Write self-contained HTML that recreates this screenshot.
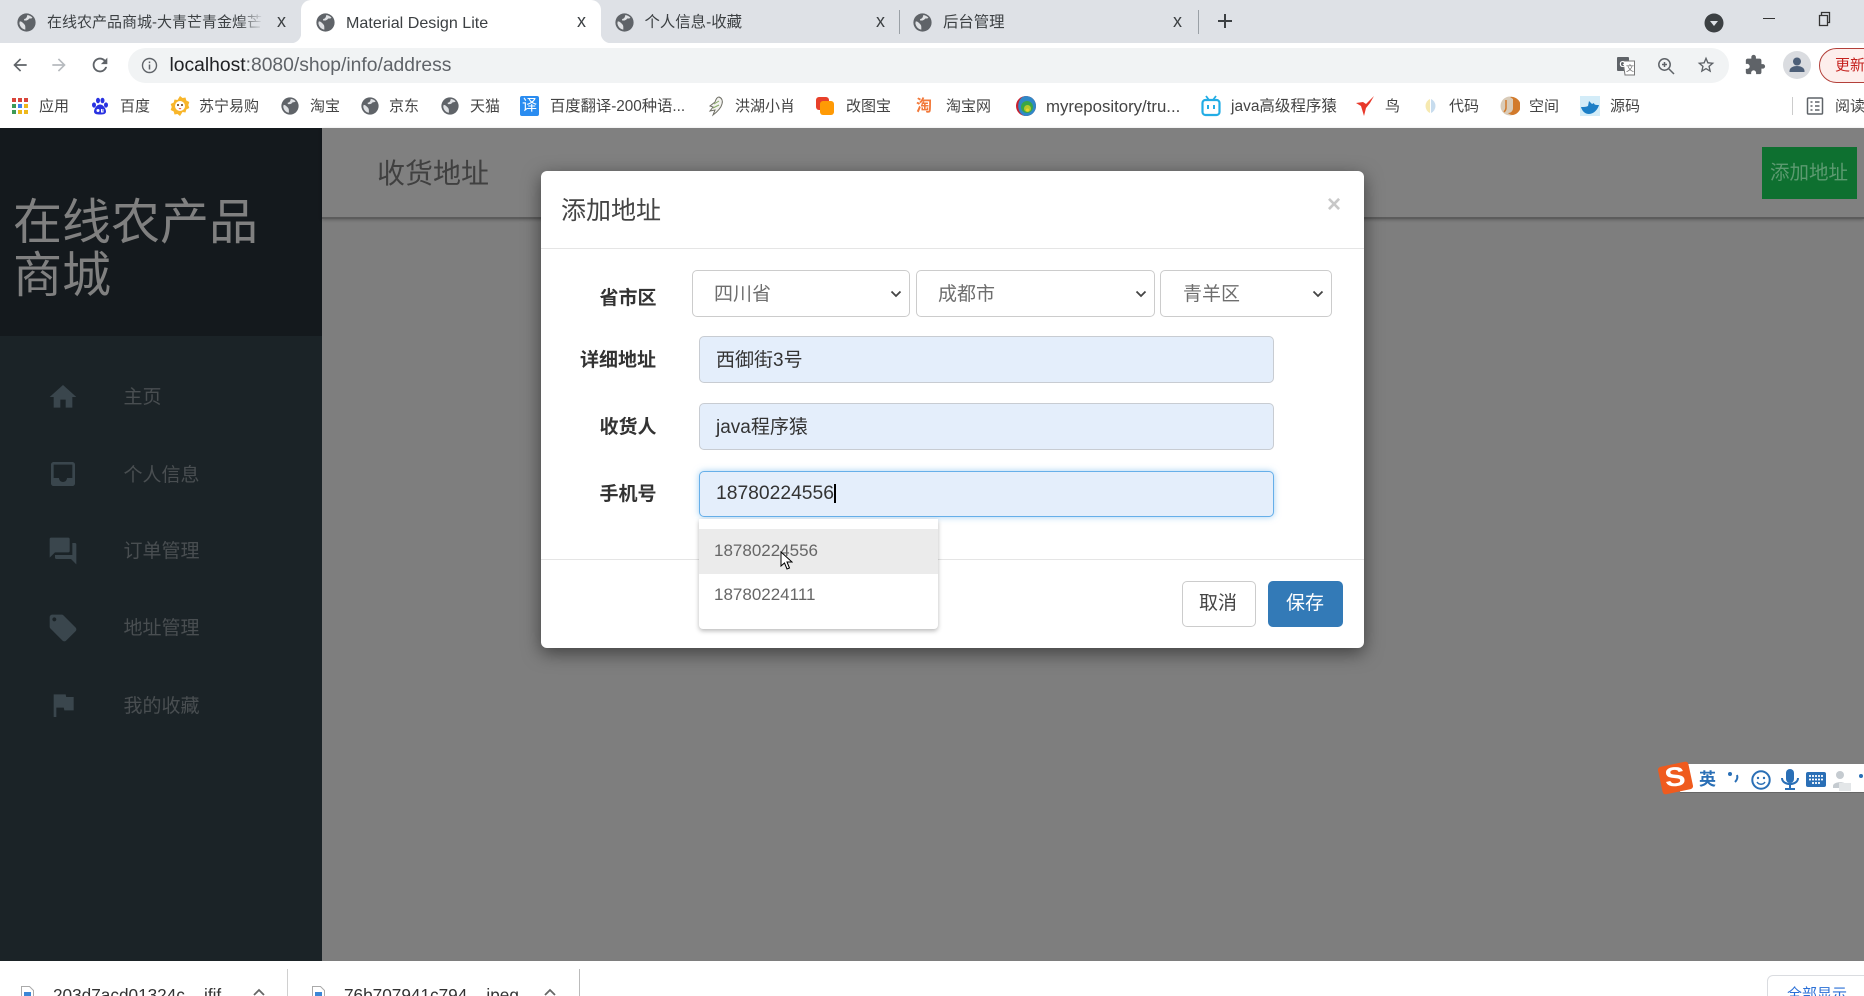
<!DOCTYPE html>
<html lang="zh-CN">
<head>
<meta charset="utf-8">
<title>Material Design Lite</title>
<style>
html,body{margin:0;padding:0;width:1864px;height:996px;overflow:hidden;background:#fff}
body{position:relative;font-family:"Liberation Sans","Noto Sans CJK SC",sans-serif;color:#333}
div,span,svg{position:absolute;box-sizing:border-box}
.t{white-space:nowrap}
.tab{font-size:15px;line-height:20px;top:13px;color:#3c4043}
.x{font-size:18px;line-height:20px;top:11px;color:#3c4043;font-weight:normal}
.bk{font-size:15px;line-height:20px;top:97px;color:#444}
.lbl{font-size:19px;font-weight:bold;line-height:26px;color:#333}
.nav{font-size:19px;line-height:26px;left:123.500px;color:#494e51}
.ni{left:47px;width:32px;height:32px;fill:#3a464d}
.sel{top:270px;height:47px;background:#fff;border:1px solid #ccc;border-radius:5px}
.st{top:284px;font-size:19px;line-height:22px;color:#6e6e6e}
.inp{left:699px;width:575px;height:47px;background:#e4eefb;border:1px solid #c8ccd2;border-radius:5px}
.it{left:716px;font-size:19px;line-height:26px;color:#333}
.g{width:19px;height:19px}
</style>
</head>
<body>
<svg width="0" height="0" style="left:0;top:0">
<defs>
<symbol id="globe" viewBox="0 0 24 24">
<circle cx="12" cy="12" r="11.500" fill="#5f6368"/>
<path d="M3.500 10.500c2 0 3 1 4.500 2.500s2.500 2.500 2.500 4.500v3.500c-4-.5-7-4-7.500-8zM13 2.500c3 .5 5 1.500 6.500 3.500-1 1-2.500 1-4 1-1 1.500-2 2-3.500 2.500H9V7.500c2 0 3.500-1.500 4-5z" fill="#dfe1e4"/>
</symbol>
</defs>
</svg>

<!-- tab strip -->
<div style="left:0;top:0;width:1864px;height:43px;background:#dee1e6"></div>
<div style="left:301px;top:0;width:300px;height:43px;background:#fff;border-radius:10px 10px 0 0"></div>
<div style="left:291px;top:33px;width:10px;height:10px;background:radial-gradient(circle at 0 0,#dee1e6 10px,#fff 10.500px)"></div>
<div style="left:601px;top:33px;width:10px;height:10px;background:radial-gradient(circle at 100% 0,#dee1e6 10px,#fff 10.500px)"></div>

<svg class="g" style="left:17px;top:13px"><use href="#globe"/></svg>
<div class="t tab" style="left:47px;width:216px;overflow:hidden">在线农产品商城-大青芒青金煌芒</div>
<div style="left:238px;top:8px;width:26px;height:28px;background:linear-gradient(90deg,rgba(222,225,230,0),#dee1e6)"></div>
<div class="t x" style="left:277px">x</div>

<svg class="g" style="left:316px;top:13px"><use href="#globe"/></svg>
<div class="t tab" style="left:346px;font-size:16.100px">Material Design Lite</div>
<div class="t x" style="left:577px">x</div>

<svg class="g" style="left:615px;top:13px"><use href="#globe"/></svg>
<div class="t tab" style="left:644.500px;font-size:15.400px">个人信息-收藏</div>
<div class="t x" style="left:876px">x</div>
<div style="left:899px;top:10px;width:1px;height:24px;background:#9aa0a6"></div>

<svg class="g" style="left:913px;top:13px"><use href="#globe"/></svg>
<div class="t tab" style="left:943px;font-size:15.400px">后台管理</div>
<div class="t x" style="left:1173px">x</div>
<div style="left:1198px;top:10px;width:1px;height:24px;background:#9aa0a6"></div>
<svg style="left:1216px;top:12px" width="18" height="18" viewBox="0 0 18 18"><path d="M9 2v14M2 9h14" stroke="#3c4043" stroke-width="2" fill="none"/></svg>

<svg style="left:1704px;top:13px" width="20" height="20" viewBox="0 0 20 20"><circle cx="10" cy="10" r="9.500" fill="#3c4043"/><path d="M6 8h8l-4 5z" fill="#dee1e6"/></svg>
<div style="left:1763px;top:18px;width:12px;height:1px;background:#333"></div>
<svg style="left:1818px;top:11px" width="14" height="16" viewBox="0 0 14 16"><path d="M3.500 4.500V1.500h8v10h-2.500M1.500 4.500h8v10h-8z" stroke="#333" stroke-width="1.300" fill="none"/></svg>

<!-- toolbar -->
<div style="left:0;top:43px;width:1864px;height:85px;background:#fff"></div>
<div style="left:128px;top:48px;width:1601px;height:35px;background:#f1f3f4;border-radius:18px"></div>
<svg style="left:10px;top:55px" width="20" height="20" viewBox="0 0 24 24"><path d="M20 11H7.800l5.600-5.600L12 4l-8 8 8 8 1.400-1.400L7.800 13H20z" fill="#5f6368"/></svg>
<svg style="left:49px;top:55px" width="20" height="20" viewBox="0 0 24 24"><path d="M12 4l-1.400 1.400 5.600 5.600H4v2h12.200l-5.600 5.600L12 20l8-8z" fill="#b6babe"/></svg>
<svg style="left:89px;top:54px" width="22" height="22" viewBox="0 0 24 24"><path d="M17.650 6.350C16.200 4.900 14.210 4 12 4c-4.420 0-7.990 3.580-7.990 8s3.570 8 7.990 8c3.730 0 6.840-2.550 7.730-6h-2.080c-.82 2.330-3.040 4-5.650 4-3.310 0-6-2.690-6-6s2.690-6 6-6c1.660 0 3.140.69 4.220 1.780L13 11h7V4l-2.350 2.350z" fill="#5f6368"/></svg>
<svg style="left:141px;top:57px" width="17" height="17" viewBox="0 0 17 17"><circle cx="8.500" cy="8.500" r="7" fill="none" stroke="#5f6368" stroke-width="1.400"/><path d="M8.500 7.500v5M8.500 4.500v1.600" stroke="#5f6368" stroke-width="1.500"/></svg>
<div class="t" style="left:169.500px;top:55px;font-size:19.300px;line-height:21px;color:#202124">localhost<span style="position:static;color:#5f6368">:8080/shop/info/address</span></div>

<svg style="left:1616px;top:56px" width="20" height="20" viewBox="0 0 20 20"><rect x="1" y="1" width="12" height="14" rx="1" fill="#5f6368"/><path d="M7 5h11.500v14H9z" fill="#fff" stroke="#777" stroke-width="1"/><text x="3.500" y="11" font-size="8" fill="#fff" font-family="Liberation Sans" font-weight="bold">G</text><text x="10" y="15" font-size="8" fill="#666" font-family="Noto Sans CJK SC">文</text></svg>
<svg style="left:1657px;top:57px" width="18" height="18" viewBox="0 0 18 18"><circle cx="7.500" cy="7.500" r="5.700" fill="none" stroke="#5f6368" stroke-width="1.500"/><path d="M12 12l5 5M5 7.500h5M7.500 5v5" stroke="#5f6368" stroke-width="1.500"/></svg>
<svg style="left:1696px;top:55px" width="20" height="20" viewBox="0 0 24 24"><path d="M22 9.240l-7.190-.62L12 2 9.190 8.630 2 9.240l5.460 4.730L5.820 21 12 17.270 18.180 21l-1.630-7.030L22 9.240zM12 15.400l-3.760 2.270 1-4.280-3.320-2.880 4.380-.38L12 6.100l1.710 4.040 4.380.38-3.320 2.880 1 4.280L12 15.400z" fill="#5f6368"/></svg>
<svg style="left:1744px;top:54px" width="22" height="22" viewBox="0 0 24 24"><path d="M20.500 11H19V7c0-1.100-.9-2-2-2h-4V3.500C13 2.120 11.880 1 10.500 1S8 2.120 8 3.500V5H4c-1.100 0-1.990.9-1.990 2v3.800H3.500c1.490 0 2.700 1.210 2.700 2.700s-1.210 2.700-2.700 2.700H2V20c0 1.100.9 2 2 2h3.800v-1.500c0-1.490 1.210-2.700 2.700-2.700 1.490 0 2.700 1.210 2.700 2.700V22H17c1.100 0 2-.9 2-2v-4h1.500c1.380 0 2.500-1.120 2.500-2.500S21.880 11 20.500 11z" fill="#5f6368"/></svg>
<svg style="left:1783px;top:51px" width="28" height="28" viewBox="0 0 28 28"><circle cx="14" cy="14" r="14" fill="#dadce0"/><circle cx="14" cy="10.500" r="4" fill="#4d5f78"/><path d="M6.500 20c0-3.500 4-5 7.500-5s7.500 1.500 7.500 5v1h-15z" fill="#4d5f78"/></svg>
<div style="left:1819px;top:48px;width:70px;height:35px;background:#fdeeec;border:1px solid #b3403a;border-radius:18px"></div>
<div class="t" style="left:1835px;top:55px;font-size:15px;line-height:21px;color:#c5221f">更新</div>

<!-- bookmarks -->
<svg style="left:11px;top:97px" width="18" height="18" viewBox="0 0 18 18">
<g>
<rect x="1" y="1" width="4" height="4" fill="#d9453a"/><rect x="7" y="1" width="4" height="4" fill="#d9453a"/><rect x="13" y="1" width="4" height="4" fill="#d9453a"/>
<rect x="1" y="7" width="4" height="4" fill="#3c9a56"/><rect x="7" y="7" width="4" height="4" fill="#3f82ee"/><rect x="13" y="7" width="4" height="4" fill="#eeb81c"/>
<rect x="1" y="13" width="4" height="4" fill="#3c9a56"/><rect x="7" y="13" width="4" height="4" fill="#eeb81c"/><rect x="13" y="13" width="4" height="4" fill="#eeb81c"/>
</g></svg>
<div class="t bk" style="left:39px">应用</div>

<svg style="left:91px;top:97px" width="18" height="18" viewBox="0 0 18 18"><g fill="#2932e1"><ellipse cx="3" cy="8" rx="2" ry="2.600"/><ellipse cx="7" cy="3.500" rx="2" ry="2.800"/><ellipse cx="11.500" cy="3.500" rx="2" ry="2.800"/><ellipse cx="15" cy="8" rx="2" ry="2.600"/><path d="M9 7.500c-3 0-6 4-6 7 0 2.500 2.500 3 6 3s6-.5 6-3c0-3-3-7-6-7z"/></g><circle cx="7" cy="13.500" r="1.500" fill="#fff"/><path d="M10.500 12v3h1.500v-3" stroke="#fff" fill="none"/></svg>
<div class="t bk" style="left:120px">百度</div>

<svg style="left:170px;top:96px" width="20" height="20" viewBox="0 0 20 20"><path d="M10 0l2.500 2 3-.5.800 3 3 1.500-1 3 1 3-3 1.500-.8 3-3-.5L10 20l-2.500-2-3 .5-.8-3-3-1.500 1-3-1-3 3-1.500.8-3 3 .5z" fill="#f8b62b"/><circle cx="10" cy="10" r="5" fill="#fff"/><circle cx="8" cy="9" r="1" fill="#603813"/><circle cx="12" cy="9" r="1" fill="#603813"/><path d="M8.500 12h3l-1.500 1.500z" fill="#e8483b"/></svg>
<div class="t bk" style="left:199px">苏宁易购</div>

<svg class="g" style="left:281px;top:97px;width:18px;height:18px"><use href="#globe"/></svg>
<div class="t bk" style="left:310px">淘宝</div>
<svg class="g" style="left:361px;top:97px;width:18px;height:18px"><use href="#globe"/></svg>
<div class="t bk" style="left:389px">京东</div>
<svg class="g" style="left:441px;top:97px;width:18px;height:18px"><use href="#globe"/></svg>
<div class="t bk" style="left:470px">天猫</div>

<div style="left:520px;top:96px;width:19px;height:20px;background:#2a8cf0;border-radius:2px"></div>
<div class="t" style="left:522px;top:97px;font-size:15px;line-height:18px;color:#fff">译</div>
<div class="t bk" style="left:550px;font-size:15.300px">百度翻译-200种语...</div>

<svg style="left:706px;top:95px" width="20" height="22" viewBox="0 0 20 22"><path d="M13 2c3 1 4 4 3 7-1 4-5 8-9 11l2-5-5 1 3-4-3-1 5-4c1-3 2-5 4-5z" fill="#f2f2ee" stroke="#6f6f66"/><path d="M8 9l5-3M7 13l6-3" stroke="#8a6" fill="none"/></svg>
<div class="t bk" style="left:735px">洪湖小肖</div>

<div style="left:816px;top:97px;width:13px;height:13px;background:#e8402a;border-radius:3px"></div>
<div style="left:820px;top:101px;width:14px;height:14px;background:#ff9a05;border-radius:3px"></div>
<div class="t bk" style="left:846px">改图宝</div>

<div class="t" style="left:916px;top:97px;font-size:16px;line-height:20px;color:#f2793a;font-weight:bold">淘</div>
<div class="t bk" style="left:946px">淘宝网</div>

<svg style="left:1016px;top:96px" width="20" height="20" viewBox="0 0 20 20"><circle cx="10" cy="10" r="10" fill="#c8202f"/><path d="M10 0a10 10 0 0 1 0 20 7 9 0 0 1 0-20z" fill="#2f88c8"/><circle cx="11" cy="11" r="6" fill="#3aa648"/><circle cx="11.500" cy="12.500" r="3.500" fill="#b7c92b"/><circle cx="11.500" cy="14" r="1.500" fill="#e8d62a"/></svg>
<div class="t bk" style="left:1046px;font-size:16.800px">myrepository/tru...</div>

<svg style="left:1201px;top:95px" width="20" height="22" viewBox="0 0 20 22"><path d="M5 1l3 4M15 1l-3 4" stroke="#23ade5" stroke-width="1.800"/><rect x="1.500" y="5" width="17" height="15" rx="3" fill="none" stroke="#23ade5" stroke-width="2.200"/><rect x="6" y="10" width="2" height="4" fill="#23ade5"/><rect x="12" y="10" width="2" height="4" fill="#23ade5"/></svg>
<div class="t bk" style="left:1231px;font-size:15.500px">java高级程序猿</div>

<svg style="left:1355px;top:96px" width="20" height="21" viewBox="0 0 20 21"><path d="M19 0L11 8 8 6 1 7l5 3 3 10 2-8 4-5z" fill="#e8382a"/></svg>
<div class="t bk" style="left:1385px">鸟</div>

<svg style="left:1421px;top:97px" width="18" height="18" viewBox="0 0 18 18"><path d="M9 2a7 7.500 0 0 0 0 14z" fill="#f6e9b0"/><path d="M10 2a7 7.500 0 0 1 0 14z" fill="#c7dcee"/></svg>
<div class="t bk" style="left:1449px">代码</div>

<svg style="left:1500px;top:96px" width="20" height="20" viewBox="0 0 20 20"><circle cx="10" cy="10" r="9.500" fill="#d9cbb8"/><path d="M10 1a9 9 0 0 1 3 18c-2 0-4-1-5-2 3 0 5-2 5-5V3z" fill="#d27a2b"/><path d="M6 4v8c0 2-1 3-2 4" stroke="#d27a2b" stroke-width="1.500" fill="none"/></svg>
<div class="t bk" style="left:1529px">空间</div>

<div style="left:1580px;top:96px;width:20px;height:20px;background:#d3ecf8"></div>
<svg style="left:1580px;top:96px" width="20" height="20" viewBox="0 0 20 20"><path d="M1 11c3 0 5 0 7-1l1-5 3 3 2-1c0 2 2 2 5 2-1 4-5 9-10 9-4 0-7-3-8-7z" fill="#1c7fc7"/></svg>
<div class="t bk" style="left:1610px">源码</div>

<div style="left:1792px;top:97px;width:1px;height:18px;background:#ccc"></div>
<svg style="left:1806px;top:97px" width="18" height="18" viewBox="0 0 18 18"><rect x="1.500" y="1" width="15" height="16" rx="1" fill="none" stroke="#5f6368" stroke-width="1.500"/><path d="M4.500 5h2M4.500 9h2M4.500 13h2M9 5h4.500M9 9h4.500M9 13h4.500" stroke="#5f6368" stroke-width="1.400"/></svg>
<div class="t bk" style="left:1835px">阅读</div>

<!-- page (dimmed) -->
<div style="left:0;top:128px;width:1864px;height:833px;background:#7e7e7e"></div>
<div style="left:0;top:128px;width:322px;height:833px;background:#1b2327"></div>
<div style="left:0;top:128px;width:322px;height:208px;background:#14191d"></div>
<div class="t" style="left:13px;top:197px;font-size:49px;line-height:53px;color:#808080;width:300px;white-space:normal">在线农产品<br>商城</div>

<svg class="ni" style="top:381px" viewBox="0 0 24 24"><path d="M10 20v-6h4v6h5v-8h3L12 3 2 12h3v8z"/></svg>
<div class="t nav" style="top:385px">主页</div>
<svg class="ni" style="top:458px" viewBox="0 0 24 24"><path d="M19 3H4.990c-1.110 0-1.980.89-1.980 2L3 19c0 1.100.88 2 1.990 2H19c1.100 0 2-.9 2-2V5c0-1.110-.9-2-2-2zm0 12h-4c0 1.660-1.350 3-3 3s-3-1.340-3-3H4.990V5H19v10z"/></svg>
<div class="t nav" style="top:463px">个人信息</div>
<svg class="ni" style="top:535px" viewBox="0 0 24 24"><path d="M21 6h-2v9H6v2c0 .55.45 1 1 1h11l4 4V7c0-.55-.45-1-1-1zm-4 6V3c0-.55-.45-1-1-1H3c-.55 0-1 .45-1 1v14l4-4h10c.55 0 1-.45 1-1z"/></svg>
<div class="t nav" style="top:539px">订单管理</div>
<svg class="ni" style="top:612px" viewBox="0 0 24 24"><path d="M21.410 11.580l-9-9C12.050 2.220 11.550 2 11 2H4c-1.100 0-2 .9-2 2v7c0 .55.22 1.050.59 1.420l9 9c.36.36.86.58 1.410.58.55 0 1.050-.22 1.410-.59l7-7c.37-.36.59-.86.59-1.410 0-.55-.23-1.060-.59-1.420zM5.500 7C4.670 7 4 6.330 4 5.500S4.670 4 5.500 4 7 4.670 7 5.500 6.330 7 5.500 7z"/></svg>
<div class="t nav" style="top:616px">地址管理</div>
<svg class="ni" style="top:689px" viewBox="0 0 24 24"><path d="M14.400 6L14 4H5v17h2v-7h5.600l.4 2h7V6z"/></svg>
<div class="t nav" style="top:694px">我的收藏</div>

<div style="left:322px;top:128px;width:1542px;height:91px;background:#808080;border-bottom:2px solid #5c5c5c;box-shadow:0 1px 3px rgba(0,0,0,.25)"></div>
<div class="t" style="left:377px;top:156px;font-size:28px;line-height:36px;color:#404040">收货地址</div>
<div style="left:1762px;top:147px;width:95px;height:52px;background:#0e7030"></div>
<div class="t" style="left:1770px;top:161px;font-size:19.500px;line-height:25px;color:#5c9a70">添加地址</div>

<!-- modal -->
<div style="left:541px;top:171px;width:823px;height:477px;background:#fff;border-radius:6px;box-shadow:0 5px 18px rgba(0,0,0,.5)"></div>
<div class="t" style="left:561px;top:194px;font-size:25px;line-height:34px;color:#444">添加地址</div>
<div class="t" style="left:1327px;top:192px;font-size:24px;line-height:26px;font-weight:bold;color:#c8c8c8">×</div>
<div style="left:541px;top:248px;width:823px;height:1px;background:#e5e5e5"></div>

<div class="t lbl" style="left:599.500px;top:286px">省市区</div>
<div class="t lbl" style="left:580px;top:348px">详细地址</div>
<div class="t lbl" style="left:599.500px;top:415px">收货人</div>
<div class="t lbl" style="left:599.500px;top:482px">手机号</div>

<div class="sel" style="left:692px;width:218px"></div>
<div class="t st" style="left:714px">四川省</div>
<svg style="left:890px;top:290px" width="12" height="8" viewBox="0 0 12 8"><path d="M1.500 1.500L6 6l4.500-4.500" stroke="#444" stroke-width="1.800" fill="none"/></svg>
<div class="sel" style="left:916px;width:239px"></div>
<div class="t st" style="left:938px">成都市</div>
<svg style="left:1135px;top:290px" width="12" height="8" viewBox="0 0 12 8"><path d="M1.500 1.500L6 6l4.500-4.500" stroke="#444" stroke-width="1.800" fill="none"/></svg>
<div class="sel" style="left:1160px;width:172px"></div>
<div class="t st" style="left:1183px">青羊区</div>
<svg style="left:1312px;top:290px" width="12" height="8" viewBox="0 0 12 8"><path d="M1.500 1.500L6 6l4.500-4.500" stroke="#444" stroke-width="1.800" fill="none"/></svg>

<div class="inp" style="top:336px"></div>
<div class="t it" style="top:348px">西御街3号</div>
<div class="inp" style="top:403px"></div>
<div class="t it" style="top:415px">java程序猿</div>
<div class="inp" style="top:471px;height:46px;border-color:#66afe9;box-shadow:0 0 7px rgba(102,175,233,.6)"></div>
<div class="t it" style="top:481px;font-size:19.300px">18780224556</div>
<div style="left:834px;top:484px;width:1.500px;height:19px;background:#000"></div>

<div style="left:541px;top:559px;width:823px;height:1px;background:#e5e5e5"></div>

<div style="left:699px;top:519px;width:239px;height:110px;background:#fff;border-radius:0 0 4px 4px;box-shadow:0 2px 5px rgba(0,0,0,.28)"></div>
<div style="left:699px;top:529px;width:239px;height:45px;background:#ebebeb"></div>
<div class="t" style="left:714px;top:540px;font-size:17px;line-height:22px;color:#666">18780224556</div>
<div class="t" style="left:714px;top:584px;font-size:17px;line-height:22px;color:#666">18780224111</div>
<svg style="left:780px;top:551px" width="13" height="19" viewBox="0 0 13 19"><path d="M1 1v14l3.500-3 2.500 6 2.500-1-2.500-6h5z" fill="#fff" stroke="#000" stroke-width="1"/></svg>

<div style="left:1182px;top:581px;width:74px;height:46px;background:#fff;border:1px solid #ccc;border-radius:5px"></div>
<div class="t" style="left:1199px;top:591px;font-size:19px;line-height:26px;color:#444">取消</div>
<div style="left:1268px;top:581px;width:75px;height:46px;background:#337ab7;border-radius:5px"></div>
<div class="t" style="left:1286px;top:591px;font-size:19px;line-height:26px;color:#fff">保存</div>

<!-- sogou ime -->
<div style="left:1680px;top:764px;width:184px;height:29px;background:#fff;border-bottom:1px solid #666"></div>
<div style="left:1660px;top:764px;width:31px;height:28px;background:#ef5b1e;border-radius:3px;transform:rotate(-12deg)"></div>
<div class="t" style="left:1666px;top:761px;font-size:27px;line-height:32px;font-weight:bold;color:#fff;transform:scaleX(1.150) rotate(-6deg)">S</div>
<div class="t" style="left:1699px;top:770px;font-size:17px;line-height:20px;font-weight:bold;color:#2a6fb6">英</div>
<svg style="left:1726px;top:768px" width="138" height="24" viewBox="0 0 138 24">
<circle cx="4" cy="6" r="2" fill="#2a6fb6"/><path d="M11 7c1 3 0 5-2 7" stroke="#2a6fb6" stroke-width="2" fill="none"/>
<circle cx="35" cy="12" r="8.700" fill="none" stroke="#2a6fb6" stroke-width="2"/><circle cx="32" cy="10" r="1.200" fill="#2a6fb6"/><circle cx="38" cy="10" r="1.200" fill="#2a6fb6"/><path d="M31 14c2 3 6 3 8 0" stroke="#2a6fb6" stroke-width="1.500" fill="none"/>
<rect x="60" y="1" width="8" height="14" rx="4" fill="#2a6fb6"/><path d="M56 10c0 8 16 8 16 0M64 17v4M59 21h10" stroke="#2a6fb6" stroke-width="2" fill="none"/>
<rect x="80" y="4" width="20" height="15" rx="2" fill="#2a6fb6"/><path d="M83 8h14M83 11.500h14M86 15h8" stroke="#fff" stroke-width="1.800" stroke-dasharray="2 1"/>
<circle cx="114" cy="7" r="4" fill="#c5cbd0"/><path d="M107 18c0-5 14-5 14 0v2h-14z" fill="#c5cbd0"/><rect x="113" y="15" width="12" height="8" fill="#e3e6e8"/>
<circle cx="135" cy="8" r="2" fill="#2a6fb6"/>
</svg>

<!-- download bar -->
<div style="left:0;top:961px;width:1864px;height:35px;background:#fff;overflow:hidden">
<div style="left:287px;top:8px;width:1px;height:27px;background:#d0d0d0"></div>
<div style="left:579px;top:8px;width:1px;height:27px;background:#bbb"></div>
<svg style="left:21px;top:25px" width="13" height="16" viewBox="0 0 13 16"><path d="M.5.500h8l4 4v11H.5z" fill="#fff" stroke="#aaa"/><rect x="3" y="6" width="7" height="7" fill="#3b87d6"/></svg>
<div class="t" style="left:53px;top:24px;font-size:17.200px;line-height:20px;color:#333">203d7acd01324c....jfif</div>
<svg style="left:252px;top:27px" width="14" height="9" viewBox="0 0 14 9"><path d="M2 7l5-5 5 5" stroke="#666" stroke-width="1.800" fill="none"/></svg>
<svg style="left:312px;top:25px" width="13" height="16" viewBox="0 0 13 16"><path d="M.5.500h8l4 4v11H.5z" fill="#fff" stroke="#aaa"/><rect x="3" y="6" width="7" height="7" fill="#3b87d6"/></svg>
<div class="t" style="left:344px;top:24px;font-size:17.200px;line-height:20px;color:#333">76b707941c794....jpeg</div>
<svg style="left:543px;top:27px" width="14" height="9" viewBox="0 0 14 9"><path d="M2 7l5-5 5 5" stroke="#666" stroke-width="1.800" fill="none"/></svg>
<div style="left:1767px;top:14px;width:110px;height:40px;background:#fff;border:1px solid #dadce0;border-radius:6px"></div>
<div class="t" style="left:1787px;top:24px;font-size:15px;line-height:20px;color:#2a6fd6">全部显示</div>
</div>
</body>
</html>
